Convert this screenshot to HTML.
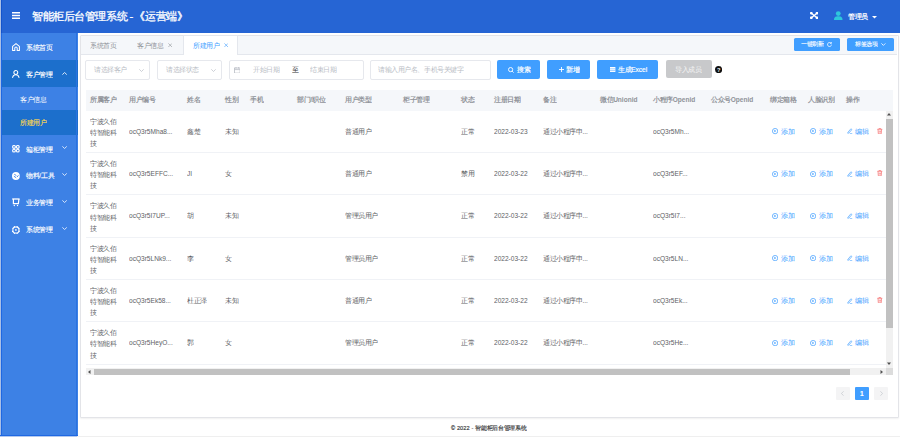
<!DOCTYPE html>
<html><head><meta charset="utf-8">
<style>
*{margin:0;padding:0;box-sizing:border-box;}
html,body{width:900px;height:437px;overflow:hidden;background:#fff;font-family:"Liberation Sans",sans-serif;}
.a{position:absolute;}
.t{position:absolute;white-space:nowrap;line-height:1;transform-origin:0 0;transform:scale(0.46875);}
</style></head>
<body>
<div class="a" style="left:0px;top:0px;width:900px;height:32.6px;background:#2665d4"></div>
<svg class="a" style="left:11.7px;top:12px" width="8.5" height="7" viewBox="0 0 8.5 7"><rect x="0" y="0" width="8.5" height="1.5" fill="#fff"/><rect x="0" y="2.75" width="8.5" height="1.5" fill="#fff"/><rect x="0" y="5.5" width="8.5" height="1.5" fill="#fff"/></svg>
<div class="t" style="left:31.5px;top:10.8px;font-size:24px;color:#fff;letter-spacing:-1.45px;-webkit-text-stroke:0.6px #fff;">智能柜后台管理系统 -</div>
<div class="t" style="left:134.4px;top:10.8px;font-size:24px;color:#fff;letter-spacing:-0.9px;-webkit-text-stroke:0.6px #fff;">《运营端》</div>
<svg class="a" style="left:809.8px;top:12px" width="8.3" height="7" viewBox="0 0 8.3 7"><path d="M1.2 1.1 L7.1 5.9 M7.1 1.1 L1.2 5.9" stroke="#fff" stroke-width="1.3"/><rect x="0" y="0" width="2.6" height="2.4" rx="0.8" fill="#fff"/><rect x="5.7" y="0" width="2.6" height="2.4" rx="0.8" fill="#fff"/><rect x="0" y="4.6" width="2.6" height="2.4" rx="0.8" fill="#fff"/><rect x="5.7" y="4.6" width="2.6" height="2.4" rx="0.8" fill="#fff"/></svg>
<svg class="a" style="left:834px;top:11px" width="8.5" height="9" viewBox="0 0 8.5 9"><circle cx="4.25" cy="2.6" r="2.4" fill="#2ec7dc"/><path d="M0 9 C0 5.8 1.8 5.2 4.25 5.2 C6.7 5.2 8.5 5.8 8.5 9Z" fill="#2ec7dc"/></svg>
<div class="t" style="left:847.8px;top:13.3px;font-size:14px;color:#fff;font-weight:bold;">管理员</div>
<svg class="a" style="left:871.7px;top:16px" width="5" height="2.5" viewBox="0 0 5 2.5"><path d="M0 0 H5 L2.5 2.5Z" fill="#fff"/></svg>
<div class="a" style="left:0px;top:32.6px;width:77.5px;height:404.4px;background:#3d81e5"></div>
<div class="a" style="left:0px;top:59.9px;width:77.5px;height:26.7px;background:#1c6fcc"></div>
<div class="a" style="left:0px;top:110.4px;width:77.5px;height:24.6px;background:#1c6fcc"></div>
<svg class="a" style="left:12px;top:42.8px" width="8" height="8" viewBox="0 0 8 8"><path d="M0.6 7.4 V3.3 L4 0.6 L7.4 3.3 V7.4 H5.2 V5.2 A1.2 1.2 0 0 0 2.8 5.2 V7.4Z" fill="none" stroke="#fff" stroke-width="1.05" stroke-linejoin="round"/></svg>
<div class="t" style="left:26px;top:43.9px;font-size:14px;color:#fff;-webkit-text-stroke:0.25px #fff;">系统首页</div>
<svg class="a" style="left:12.3px;top:70.4px" width="7.6" height="7.8" viewBox="0 0 7.6 7.8"><circle cx="3.8" cy="2.5" r="1.95" fill="none" stroke="#fff" stroke-width="1.05"/><path d="M0.6 7.5 C1 5.6 2.2 4.7 3.8 4.7 C5.4 4.7 6.6 5.6 7 7.5" fill="none" stroke="#fff" stroke-width="1.05" stroke-linecap="round"/></svg>
<div class="t" style="left:26px;top:70.7px;font-size:14px;color:#fff;-webkit-text-stroke:0.25px #fff;">客户管理</div>
<svg class="a" style="left:62.4px;top:72.2px" width="5.2" height="3" viewBox="0 0 5.2 3"><path d="M0.4 2.6 L2.6 0.5 L4.8 2.6" fill="none" stroke="#fff" stroke-width="0.85"/></svg>
<div class="t" style="left:19.9px;top:96.1px;font-size:14px;color:#fff;">客户信息</div>
<div class="t" style="left:19.9px;top:119.1px;font-size:14px;color:#ffd84b;-webkit-text-stroke:0.25px #ffd84b;">所建用户</div>
<svg class="a" style="left:12px;top:145.2px" width="7.8" height="7.6" viewBox="0 0 7.8 7.6"><circle cx="2" cy="1.95" r="1.4" fill="none" stroke="#fff" stroke-width="1.15"/><circle cx="5.8" cy="1.95" r="1.4" fill="none" stroke="#fff" stroke-width="1.15"/><circle cx="2" cy="5.65" r="1.4" fill="none" stroke="#fff" stroke-width="1.15"/><circle cx="5.8" cy="5.65" r="1.4" fill="none" stroke="#fff" stroke-width="1.15"/></svg>
<div class="t" style="left:26px;top:145.5px;font-size:14px;color:#fff;-webkit-text-stroke:0.25px #fff;">箱柜管理</div>
<svg class="a" style="left:62.4px;top:146.3px" width="5.2" height="3" viewBox="0 0 5.2 3"><path d="M0.4 0.4 L2.6 2.5 L4.8 0.4" fill="none" stroke="#fff" stroke-width="0.8"/></svg>
<svg class="a" style="left:12px;top:171.9px" width="7.8" height="8" viewBox="0 0 7.8 8"><circle cx="3.9" cy="4" r="3.9" fill="#fff"/><path d="M2.6 2.5 L4 3.3 M2.2 4.4 L3.9 5.6 M5.3 4.7 L6.2 3.6" stroke="#3d81e5" stroke-width="0.9" stroke-linecap="round"/></svg>
<div class="t" style="left:26px;top:172.3px;font-size:14px;color:#fff;-webkit-text-stroke:0.25px #fff;">物料/工具</div>
<svg class="a" style="left:62.4px;top:173.1px" width="5.2" height="3" viewBox="0 0 5.2 3"><path d="M0.4 0.4 L2.6 2.5 L4.8 0.4" fill="none" stroke="#fff" stroke-width="0.8"/></svg>
<svg class="a" style="left:12px;top:198px" width="7.8" height="8.6" viewBox="0 0 7.8 8.6"><path d="M0.2 1 H7.6" stroke="#fff" stroke-width="1.3"/><path d="M1.4 1 V5.6 H6.4 L6.9 1" fill="none" stroke="#fff" stroke-width="1.2"/><circle cx="2.3" cy="7.5" r="0.7" fill="#fff"/><circle cx="5.5" cy="7.5" r="0.7" fill="#fff"/></svg>
<div class="t" style="left:26px;top:199.3px;font-size:14px;color:#fff;-webkit-text-stroke:0.25px #fff;">业务管理</div>
<svg class="a" style="left:62.4px;top:200.1px" width="5.2" height="3" viewBox="0 0 5.2 3"><path d="M0.4 0.4 L2.6 2.5 L4.8 0.4" fill="none" stroke="#fff" stroke-width="0.8"/></svg>
<svg class="a" style="left:12px;top:226px" width="7.8" height="7.9" viewBox="0 0 7.8 7.9"><path d="M2.4 0 H5.4 L7.8 2.4 V5.5 L5.4 7.9 H2.4 L0 5.5 V2.4Z" fill="#fff"/><circle cx="3.9" cy="3.95" r="2.55" fill="#3d81e5"/><path d="M3.9 0 V0.9 M3.9 7.9 V7 M0 3.95 H0.9 M7.8 3.95 H6.9" stroke="#3d81e5" stroke-width="0.8"/><rect x="3.15" y="3.2" width="1.5" height="1.5" fill="#fff"/></svg>
<div class="t" style="left:26px;top:226.3px;font-size:14px;color:#fff;-webkit-text-stroke:0.25px #fff;">系统管理</div>
<svg class="a" style="left:62.4px;top:227.1px" width="5.2" height="3" viewBox="0 0 5.2 3"><path d="M0.4 0.4 L2.6 2.5 L4.8 0.4" fill="none" stroke="#fff" stroke-width="0.8"/></svg>
<div class="a" style="left:80px;top:35px;width:818.5px;height:382.5px;border:1px solid #e3e4e8;border-radius:1px;background:#fff;box-shadow:0 1px 2px rgba(0,0,0,.06)"></div>
<div class="a" style="left:81px;top:36px;width:816px;height:19px;background:#f5f7fa;border-bottom:1px solid #e4e7ed"></div>
<div class="t" style="left:90px;top:42.1px;font-size:14px;color:#909399;">系统首页</div>
<div class="t" style="left:137.2px;top:42.1px;font-size:14px;color:#909399;">客户信息</div>
<svg class="a" style="left:168px;top:43.2px" width="4.4" height="4.4" viewBox="0 0 4.4 4.4"><path d="M0.4 0.4 L4 4 M4 0.4 L0.4 4" stroke="#909399" stroke-width="0.6"/></svg>
<div class="a" style="left:182.8px;top:35px;width:55.5px;height:20px;background:#fff;border:1px solid #e4e7ed;border-bottom:none"></div>
<div class="t" style="left:192.8px;top:42.1px;font-size:14px;color:#409eff;">所建用户</div>
<svg class="a" style="left:224px;top:43.2px" width="4.4" height="4.4" viewBox="0 0 4.4 4.4"><path d="M0.4 0.4 L4 4 M4 0.4 L0.4 4" stroke="#409eff" stroke-width="0.6"/></svg>
<div class="a" style="left:793.7px;top:38px;width:46.5px;height:13.2px;background:#409eff;border-radius:1.5px"></div>
<div class="t" style="left:801px;top:41.2px;font-size:12px;color:#fff;-webkit-text-stroke:0.2px #fff;">一键刷新</div>
<svg class="a" style="left:827.3px;top:42px" width="5" height="5" viewBox="0 0 5 5"><path d="M4.1 1.3 A2 2 0 1 0 4.5 2.7" fill="none" stroke="#fff" stroke-width="0.8"/><path d="M2.9 1.4 H4.4 V0" fill="none" stroke="#fff" stroke-width="0.7"/></svg>
<div class="a" style="left:846.8px;top:38px;width:46.9px;height:13.2px;background:#409eff;border-radius:1.5px"></div>
<div class="t" style="left:854.8px;top:41.2px;font-size:12px;color:#fff;-webkit-text-stroke:0.2px #fff;">标签选项</div>
<svg class="a" style="left:881.2px;top:43.2px" width="4.8" height="3" viewBox="0 0 4.8 3"><path d="M0.4 0.4 L2.4 2.4 L4.4 0.4" fill="none" stroke="#fff" stroke-width="0.8"/></svg>
<div class="a" style="left:85.3px;top:60px;width:64.6px;height:19.6px;border:1px solid #e6e8ed;border-radius:2px;background:#fff"></div>
<div class="t" style="left:93.9px;top:66.4px;font-size:14px;color:#b9bdc5;">请选择客户</div>
<svg class="a" style="left:139.2px;top:68.5px" width="5" height="3" viewBox="0 0 5 3"><path d="M0.3 0.3 L2.5 2.5 L4.7 0.3" fill="none" stroke="#b9bdc5" stroke-width="0.7"/></svg>
<div class="a" style="left:157px;top:60px;width:64.7px;height:19.6px;border:1px solid #e6e8ed;border-radius:2px;background:#fff"></div>
<div class="t" style="left:165.6px;top:66.4px;font-size:14px;color:#b9bdc5;">请选择状态</div>
<svg class="a" style="left:210.9px;top:68.5px" width="5" height="3" viewBox="0 0 5 3"><path d="M0.3 0.3 L2.5 2.5 L4.7 0.3" fill="none" stroke="#b9bdc5" stroke-width="0.7"/></svg>
<div class="a" style="left:228.9px;top:60px;width:134.8px;height:19.6px;border:1px solid #e6e8ed;border-radius:2px;background:#fff"></div>
<svg class="a" style="left:233.9px;top:66.5px" width="6.6" height="6.6" viewBox="0 0 6.6 6.6"><rect x="0.5" y="1" width="5.6" height="5.1" fill="none" stroke="#b9bdc5" stroke-width="0.8"/><path d="M0.5 2.6 H6.1 M2 0 V1.6 M4.6 0 V1.6" stroke="#b9bdc5" stroke-width="0.8"/></svg>
<div class="t" style="left:252.6px;top:66.4px;font-size:14px;color:#b9bdc5;">开始日期</div>
<div class="t" style="left:291.7px;top:66.4px;font-size:14px;color:#303133;">至</div>
<div class="t" style="left:310px;top:66.4px;font-size:14px;color:#b9bdc5;">结束日期</div>
<div class="a" style="left:370.4px;top:60px;width:120.2px;height:19.6px;border:1px solid #e6e8ed;border-radius:2px;background:#fff"></div>
<div class="t" style="left:378px;top:66.4px;font-size:14px;color:#b9bdc5;">请输入用户名、手机号关键字</div>
<div class="a" style="left:497.4px;top:60.2px;width:42.8px;height:19px;background:#409eff;border-radius:2px"></div>
<svg class="a" style="left:508px;top:66.8px" width="6" height="6" viewBox="0 0 6 6"><circle cx="2.6" cy="2.6" r="2.1" fill="none" stroke="#fff" stroke-width="0.9"/><path d="M4.1 4.1 L5.6 5.6" stroke="#fff" stroke-width="0.9"/></svg>
<div class="t" style="left:516.6px;top:66.4px;font-size:14px;color:#fff;-webkit-text-stroke:0.35px #fff;">搜索</div>
<div class="a" style="left:547.4px;top:60.2px;width:42.6px;height:19px;background:#409eff;border-radius:2px"></div>
<svg class="a" style="left:558.6px;top:67.2px" width="5" height="5" viewBox="0 0 5 5"><path d="M2.5 0 V5 M0 2.5 H5" stroke="#fff" stroke-width="0.9"/></svg>
<div class="t" style="left:566.4px;top:66.4px;font-size:14px;color:#fff;-webkit-text-stroke:0.35px #fff;">新增</div>
<div class="a" style="left:597px;top:60.2px;width:60.8px;height:19px;background:#409eff;border-radius:2px"></div>
<svg class="a" style="left:610.3px;top:67px" width="5.4" height="5.4" viewBox="0 0 5.4 5.4"><rect x="0" y="0" width="5.4" height="5.4" fill="#fff"/><path d="M0 1.8 H5.4 M0 3.6 H5.4" stroke="#409eff" stroke-width="0.5"/></svg>
<div class="t" style="left:618px;top:66.4px;font-size:14px;color:#fff;-webkit-text-stroke:0.35px #fff;">生成Excel</div>
<div class="a" style="left:665.6px;top:59.5px;width:46.4px;height:18.8px;background:#c8c9cb;border-radius:2px"></div>
<div class="t" style="left:675px;top:65.7px;font-size:14px;color:#f7f7f7;">导入成员</div>
<svg class="a" style="left:714.8px;top:65.6px" width="7.2" height="7.2" viewBox="0 0 7.2 7.2"><circle cx="3.6" cy="3.6" r="3.6" fill="#111"/><text x="3.6" y="5.7" font-size="5.6" font-weight="bold" text-anchor="middle" fill="#fff" font-family="Liberation Sans">?</text></svg>
<div class="a" style="left:85.6px;top:90px;width:807.4px;height:20.5px;background:#f5f7fa"></div>
<div class="t" style="left:90.4px;top:96.4px;font-size:14px;color:#909399;font-weight:bold;">所属客户</div>
<div class="t" style="left:129px;top:96.4px;font-size:14px;color:#909399;font-weight:bold;">用户编号</div>
<div class="t" style="left:186.6px;top:96.4px;font-size:14px;color:#909399;font-weight:bold;">姓名</div>
<div class="t" style="left:225px;top:96.4px;font-size:14px;color:#909399;font-weight:bold;">性别</div>
<div class="t" style="left:249.6px;top:96.4px;font-size:14px;color:#909399;font-weight:bold;">手机</div>
<div class="t" style="left:297px;top:96.4px;font-size:14px;color:#909399;font-weight:bold;">部门/职位</div>
<div class="t" style="left:345.4px;top:96.4px;font-size:14px;color:#909399;font-weight:bold;">用户类型</div>
<div class="t" style="left:403px;top:96.4px;font-size:14px;color:#909399;font-weight:bold;">柜子管理</div>
<div class="t" style="left:460.6px;top:96.4px;font-size:14px;color:#909399;font-weight:bold;">状态</div>
<div class="t" style="left:494.4px;top:96.4px;font-size:14px;color:#909399;font-weight:bold;">注册日期</div>
<div class="t" style="left:542.6px;top:96.4px;font-size:14px;color:#909399;font-weight:bold;">备注</div>
<div class="t" style="left:600px;top:96.4px;font-size:14px;color:#909399;font-weight:bold;">微信Unionid</div>
<div class="t" style="left:653px;top:96.4px;font-size:14px;color:#909399;font-weight:bold;">小程序Openid</div>
<div class="t" style="left:711px;top:96.4px;font-size:14px;color:#909399;font-weight:bold;">公众号Openid</div>
<div class="t" style="left:769.6px;top:96.4px;font-size:14px;color:#909399;font-weight:bold;">绑定箱格</div>
<div class="t" style="left:808.2px;top:96.4px;font-size:14px;color:#909399;font-weight:bold;">人脸识别</div>
<div class="t" style="left:845.6px;top:96.4px;font-size:14px;color:#909399;font-weight:bold;">操作</div>
<div class="a" style="left:85.6px;top:152.1px;width:800px;height:1px;background:#f0f2f6"></div>
<div class="t" style="left:90.4px;top:117.8px;font-size:14px;color:#606266;">宁波久佰</div>
<div class="t" style="left:90.4px;top:128.9px;font-size:14px;color:#606266;">特智能科</div>
<div class="t" style="left:90.4px;top:140.0px;font-size:14px;color:#606266;">技</div>
<div class="t" style="left:129px;top:127.8px;font-size:14px;color:#606266;">ocQ3r5Mha8...</div>
<div class="t" style="left:186.6px;top:127.8px;font-size:14px;color:#606266;">鑫楚</div>
<div class="t" style="left:225px;top:127.8px;font-size:14px;color:#606266;">未知</div>
<div class="t" style="left:345.4px;top:127.8px;font-size:14px;color:#606266;">普通用户</div>
<div class="t" style="left:460.6px;top:127.8px;font-size:14px;color:#606266;">正常</div>
<div class="t" style="left:494.4px;top:127.8px;font-size:14px;color:#606266;">2022-03-23</div>
<div class="t" style="left:542.6px;top:127.8px;font-size:14px;color:#606266;">通过小程序申...</div>
<div class="t" style="left:653px;top:127.8px;font-size:14px;color:#606266;">ocQ3r5Mh...</div>
<svg class="a" style="left:772px;top:128.4px" width="6.2" height="6.2" viewBox="0 0 6 6"><circle cx="3" cy="3" r="2.6" fill="none" stroke="#409eff" stroke-width="0.7"/><path d="M2.3 1.8 L4.1 3 L2.3 4.2Z" fill="#409eff"/></svg>
<div class="t" style="left:781px;top:127.8px;font-size:14px;color:#409eff;">添加</div>
<svg class="a" style="left:810.3px;top:128.4px" width="6.2" height="6.2" viewBox="0 0 6 6"><circle cx="3" cy="3" r="2.6" fill="none" stroke="#409eff" stroke-width="0.7"/><path d="M2.3 1.8 L4.1 3 L2.3 4.2Z" fill="#409eff"/></svg>
<div class="t" style="left:819.3px;top:127.8px;font-size:14px;color:#409eff;">添加</div>
<svg class="a" style="left:847px;top:128.3px" width="5.6" height="6" viewBox="0 0 6 6.4"><path d="M1 4.6 L4.2 0.8 L5.2 1.7 L2 5.4 L0.8 5.6Z M3 6.1 H5.6" fill="none" stroke="#409eff" stroke-width="0.7"/></svg>
<div class="t" style="left:855.3px;top:127.8px;font-size:14px;color:#409eff;">编辑</div>
<svg class="a" style="left:877.1px;top:127.89999999999999px" width="5.6" height="6.2" viewBox="0 0 5.6 6.2"><path d="M0.3 1.3 H5.3 M2 1.3 V0.4 H3.6 V1.3 M1 1.3 L1.3 5.8 H4.3 L4.6 1.3 M2.2 2.6 V4.6 M3.4 2.6 V4.6" fill="none" stroke="#f56c6c" stroke-width="0.7"/></svg>
<div class="a" style="left:85.6px;top:194.39999999999998px;width:800px;height:1px;background:#f0f2f6"></div>
<div class="t" style="left:90.4px;top:160.1px;font-size:14px;color:#606266;">宁波久佰</div>
<div class="t" style="left:90.4px;top:171.2px;font-size:14px;color:#606266;">特智能科</div>
<div class="t" style="left:90.4px;top:182.29999999999998px;font-size:14px;color:#606266;">技</div>
<div class="t" style="left:129px;top:170.1px;font-size:14px;color:#606266;">ocQ3r5EFFC...</div>
<div class="t" style="left:186.6px;top:170.1px;font-size:14px;color:#606266;">JI</div>
<div class="t" style="left:225px;top:170.1px;font-size:14px;color:#606266;">女</div>
<div class="t" style="left:345.4px;top:170.1px;font-size:14px;color:#606266;">普通用户</div>
<div class="t" style="left:460.6px;top:170.1px;font-size:14px;color:#606266;">禁用</div>
<div class="t" style="left:494.4px;top:170.1px;font-size:14px;color:#606266;">2022-03-22</div>
<div class="t" style="left:542.6px;top:170.1px;font-size:14px;color:#606266;">通过小程序申...</div>
<div class="t" style="left:653px;top:170.1px;font-size:14px;color:#606266;">ocQ3r5EF...</div>
<svg class="a" style="left:772px;top:170.7px" width="6.2" height="6.2" viewBox="0 0 6 6"><circle cx="3" cy="3" r="2.6" fill="none" stroke="#409eff" stroke-width="0.7"/><path d="M2.3 1.8 L4.1 3 L2.3 4.2Z" fill="#409eff"/></svg>
<div class="t" style="left:781px;top:170.1px;font-size:14px;color:#409eff;">添加</div>
<svg class="a" style="left:810.3px;top:170.7px" width="6.2" height="6.2" viewBox="0 0 6 6"><circle cx="3" cy="3" r="2.6" fill="none" stroke="#409eff" stroke-width="0.7"/><path d="M2.3 1.8 L4.1 3 L2.3 4.2Z" fill="#409eff"/></svg>
<div class="t" style="left:819.3px;top:170.1px;font-size:14px;color:#409eff;">添加</div>
<svg class="a" style="left:847px;top:170.6px" width="5.6" height="6" viewBox="0 0 6 6.4"><path d="M1 4.6 L4.2 0.8 L5.2 1.7 L2 5.4 L0.8 5.6Z M3 6.1 H5.6" fill="none" stroke="#409eff" stroke-width="0.7"/></svg>
<div class="t" style="left:855.3px;top:170.1px;font-size:14px;color:#409eff;">编辑</div>
<svg class="a" style="left:877.1px;top:170.2px" width="5.6" height="6.2" viewBox="0 0 5.6 6.2"><path d="M0.3 1.3 H5.3 M2 1.3 V0.4 H3.6 V1.3 M1 1.3 L1.3 5.8 H4.3 L4.6 1.3 M2.2 2.6 V4.6 M3.4 2.6 V4.6" fill="none" stroke="#f56c6c" stroke-width="0.7"/></svg>
<div class="a" style="left:85.6px;top:236.7px;width:800px;height:1px;background:#f0f2f6"></div>
<div class="t" style="left:90.4px;top:202.39999999999998px;font-size:14px;color:#606266;">宁波久佰</div>
<div class="t" style="left:90.4px;top:213.49999999999997px;font-size:14px;color:#606266;">特智能科</div>
<div class="t" style="left:90.4px;top:224.59999999999997px;font-size:14px;color:#606266;">技</div>
<div class="t" style="left:129px;top:212.39999999999998px;font-size:14px;color:#606266;">ocQ3r5I7UP...</div>
<div class="t" style="left:186.6px;top:212.39999999999998px;font-size:14px;color:#606266;">胡</div>
<div class="t" style="left:225px;top:212.39999999999998px;font-size:14px;color:#606266;">未知</div>
<div class="t" style="left:345.4px;top:212.39999999999998px;font-size:14px;color:#606266;">管理员用户</div>
<div class="t" style="left:460.6px;top:212.39999999999998px;font-size:14px;color:#606266;">正常</div>
<div class="t" style="left:494.4px;top:212.39999999999998px;font-size:14px;color:#606266;">2022-03-22</div>
<div class="t" style="left:542.6px;top:212.39999999999998px;font-size:14px;color:#606266;">通过小程序申...</div>
<div class="t" style="left:653px;top:212.39999999999998px;font-size:14px;color:#606266;">ocQ3r5I7...</div>
<svg class="a" style="left:772px;top:212.99999999999997px" width="6.2" height="6.2" viewBox="0 0 6 6"><circle cx="3" cy="3" r="2.6" fill="none" stroke="#409eff" stroke-width="0.7"/><path d="M2.3 1.8 L4.1 3 L2.3 4.2Z" fill="#409eff"/></svg>
<div class="t" style="left:781px;top:212.39999999999998px;font-size:14px;color:#409eff;">添加</div>
<svg class="a" style="left:810.3px;top:212.99999999999997px" width="6.2" height="6.2" viewBox="0 0 6 6"><circle cx="3" cy="3" r="2.6" fill="none" stroke="#409eff" stroke-width="0.7"/><path d="M2.3 1.8 L4.1 3 L2.3 4.2Z" fill="#409eff"/></svg>
<div class="t" style="left:819.3px;top:212.39999999999998px;font-size:14px;color:#409eff;">添加</div>
<svg class="a" style="left:847px;top:212.89999999999998px" width="5.6" height="6" viewBox="0 0 6 6.4"><path d="M1 4.6 L4.2 0.8 L5.2 1.7 L2 5.4 L0.8 5.6Z M3 6.1 H5.6" fill="none" stroke="#409eff" stroke-width="0.7"/></svg>
<div class="t" style="left:855.3px;top:212.39999999999998px;font-size:14px;color:#409eff;">编辑</div>
<div class="a" style="left:85.6px;top:279.0px;width:800px;height:1px;background:#f0f2f6"></div>
<div class="t" style="left:90.4px;top:244.7px;font-size:14px;color:#606266;">宁波久佰</div>
<div class="t" style="left:90.4px;top:255.79999999999998px;font-size:14px;color:#606266;">特智能科</div>
<div class="t" style="left:90.4px;top:266.9px;font-size:14px;color:#606266;">技</div>
<div class="t" style="left:129px;top:254.7px;font-size:14px;color:#606266;">ocQ3r5LNk9...</div>
<div class="t" style="left:186.6px;top:254.7px;font-size:14px;color:#606266;">李</div>
<div class="t" style="left:225px;top:254.7px;font-size:14px;color:#606266;">女</div>
<div class="t" style="left:345.4px;top:254.7px;font-size:14px;color:#606266;">管理员用户</div>
<div class="t" style="left:460.6px;top:254.7px;font-size:14px;color:#606266;">正常</div>
<div class="t" style="left:494.4px;top:254.7px;font-size:14px;color:#606266;">2022-03-22</div>
<div class="t" style="left:542.6px;top:254.7px;font-size:14px;color:#606266;">通过小程序申...</div>
<div class="t" style="left:653px;top:254.7px;font-size:14px;color:#606266;">ocQ3r5LN...</div>
<svg class="a" style="left:772px;top:255.29999999999998px" width="6.2" height="6.2" viewBox="0 0 6 6"><circle cx="3" cy="3" r="2.6" fill="none" stroke="#409eff" stroke-width="0.7"/><path d="M2.3 1.8 L4.1 3 L2.3 4.2Z" fill="#409eff"/></svg>
<div class="t" style="left:781px;top:254.7px;font-size:14px;color:#409eff;">添加</div>
<svg class="a" style="left:810.3px;top:255.29999999999998px" width="6.2" height="6.2" viewBox="0 0 6 6"><circle cx="3" cy="3" r="2.6" fill="none" stroke="#409eff" stroke-width="0.7"/><path d="M2.3 1.8 L4.1 3 L2.3 4.2Z" fill="#409eff"/></svg>
<div class="t" style="left:819.3px;top:254.7px;font-size:14px;color:#409eff;">添加</div>
<svg class="a" style="left:847px;top:255.2px" width="5.6" height="6" viewBox="0 0 6 6.4"><path d="M1 4.6 L4.2 0.8 L5.2 1.7 L2 5.4 L0.8 5.6Z M3 6.1 H5.6" fill="none" stroke="#409eff" stroke-width="0.7"/></svg>
<div class="t" style="left:855.3px;top:254.7px;font-size:14px;color:#409eff;">编辑</div>
<div class="a" style="left:85.6px;top:321.3px;width:800px;height:1px;background:#f0f2f6"></div>
<div class="t" style="left:90.4px;top:287.0px;font-size:14px;color:#606266;">宁波久佰</div>
<div class="t" style="left:90.4px;top:298.1px;font-size:14px;color:#606266;">特智能科</div>
<div class="t" style="left:90.4px;top:309.2px;font-size:14px;color:#606266;">技</div>
<div class="t" style="left:129px;top:297.0px;font-size:14px;color:#606266;">ocQ3r5Ek58...</div>
<div class="t" style="left:186.6px;top:297.0px;font-size:14px;color:#606266;">杜正泽</div>
<div class="t" style="left:225px;top:297.0px;font-size:14px;color:#606266;">未知</div>
<div class="t" style="left:345.4px;top:297.0px;font-size:14px;color:#606266;">普通用户</div>
<div class="t" style="left:460.6px;top:297.0px;font-size:14px;color:#606266;">正常</div>
<div class="t" style="left:494.4px;top:297.0px;font-size:14px;color:#606266;">2022-03-22</div>
<div class="t" style="left:542.6px;top:297.0px;font-size:14px;color:#606266;">通过小程序申...</div>
<div class="t" style="left:653px;top:297.0px;font-size:14px;color:#606266;">ocQ3r5Ek...</div>
<svg class="a" style="left:772px;top:297.6px" width="6.2" height="6.2" viewBox="0 0 6 6"><circle cx="3" cy="3" r="2.6" fill="none" stroke="#409eff" stroke-width="0.7"/><path d="M2.3 1.8 L4.1 3 L2.3 4.2Z" fill="#409eff"/></svg>
<div class="t" style="left:781px;top:297.0px;font-size:14px;color:#409eff;">添加</div>
<svg class="a" style="left:810.3px;top:297.6px" width="6.2" height="6.2" viewBox="0 0 6 6"><circle cx="3" cy="3" r="2.6" fill="none" stroke="#409eff" stroke-width="0.7"/><path d="M2.3 1.8 L4.1 3 L2.3 4.2Z" fill="#409eff"/></svg>
<div class="t" style="left:819.3px;top:297.0px;font-size:14px;color:#409eff;">添加</div>
<svg class="a" style="left:847px;top:297.5px" width="5.6" height="6" viewBox="0 0 6 6.4"><path d="M1 4.6 L4.2 0.8 L5.2 1.7 L2 5.4 L0.8 5.6Z M3 6.1 H5.6" fill="none" stroke="#409eff" stroke-width="0.7"/></svg>
<div class="t" style="left:855.3px;top:297.0px;font-size:14px;color:#409eff;">编辑</div>
<svg class="a" style="left:877.1px;top:297.1px" width="5.6" height="6.2" viewBox="0 0 5.6 6.2"><path d="M0.3 1.3 H5.3 M2 1.3 V0.4 H3.6 V1.3 M1 1.3 L1.3 5.8 H4.3 L4.6 1.3 M2.2 2.6 V4.6 M3.4 2.6 V4.6" fill="none" stroke="#f56c6c" stroke-width="0.7"/></svg>
<div class="a" style="left:85.6px;top:363.6px;width:800px;height:1px;background:#f0f2f6"></div>
<div class="t" style="left:90.4px;top:329.3px;font-size:14px;color:#606266;">宁波久佰</div>
<div class="t" style="left:90.4px;top:340.40000000000003px;font-size:14px;color:#606266;">特智能科</div>
<div class="t" style="left:90.4px;top:351.5px;font-size:14px;color:#606266;">技</div>
<div class="t" style="left:129px;top:339.3px;font-size:14px;color:#606266;">ocQ3r5HeyO...</div>
<div class="t" style="left:186.6px;top:339.3px;font-size:14px;color:#606266;">郭</div>
<div class="t" style="left:225px;top:339.3px;font-size:14px;color:#606266;">女</div>
<div class="t" style="left:345.4px;top:339.3px;font-size:14px;color:#606266;">管理员用户</div>
<div class="t" style="left:460.6px;top:339.3px;font-size:14px;color:#606266;">正常</div>
<div class="t" style="left:494.4px;top:339.3px;font-size:14px;color:#606266;">2022-03-22</div>
<div class="t" style="left:542.6px;top:339.3px;font-size:14px;color:#606266;">通过小程序申...</div>
<div class="t" style="left:653px;top:339.3px;font-size:14px;color:#606266;">ocQ3r5He...</div>
<svg class="a" style="left:772px;top:339.90000000000003px" width="6.2" height="6.2" viewBox="0 0 6 6"><circle cx="3" cy="3" r="2.6" fill="none" stroke="#409eff" stroke-width="0.7"/><path d="M2.3 1.8 L4.1 3 L2.3 4.2Z" fill="#409eff"/></svg>
<div class="t" style="left:781px;top:339.3px;font-size:14px;color:#409eff;">添加</div>
<svg class="a" style="left:810.3px;top:339.90000000000003px" width="6.2" height="6.2" viewBox="0 0 6 6"><circle cx="3" cy="3" r="2.6" fill="none" stroke="#409eff" stroke-width="0.7"/><path d="M2.3 1.8 L4.1 3 L2.3 4.2Z" fill="#409eff"/></svg>
<div class="t" style="left:819.3px;top:339.3px;font-size:14px;color:#409eff;">添加</div>
<svg class="a" style="left:847px;top:339.8px" width="5.6" height="6" viewBox="0 0 6 6.4"><path d="M1 4.6 L4.2 0.8 L5.2 1.7 L2 5.4 L0.8 5.6Z M3 6.1 H5.6" fill="none" stroke="#409eff" stroke-width="0.7"/></svg>
<div class="t" style="left:855.3px;top:339.3px;font-size:14px;color:#409eff;">编辑</div>
<div class="a" style="left:85.6px;top:368px;width:800px;height:7px;background:#f1f1f1"></div>
<div class="a" style="left:93.8px;top:368.5px;width:756.5px;height:6px;background:#c1c1c1"></div>
<svg class="a" style="left:88px;top:369.5px" width="3" height="4" viewBox="0 0 3 4"><path d="M2.5 0 L0 2 L2.5 4Z" fill="#505050"/></svg>
<svg class="a" style="left:879.7px;top:369.5px" width="3" height="4" viewBox="0 0 3 4"><path d="M0.5 0 L3 2 L0.5 4Z" fill="#505050"/></svg>
<div class="a" style="left:885.6px;top:110.5px;width:7.4px;height:257.5px;background:#f1f1f1"></div>
<div class="a" style="left:886px;top:119px;width:6.6px;height:208.5px;background:#c1c1c1"></div>
<svg class="a" style="left:887.3px;top:113px" width="4" height="3" viewBox="0 0 4 3"><path d="M0 2.5 L2 0 L4 2.5Z" fill="#505050"/></svg>
<svg class="a" style="left:887.3px;top:362.3px" width="4" height="3" viewBox="0 0 4 3"><path d="M0 0.5 L2 3 L4 0.5Z" fill="#505050"/></svg>
<div class="a" style="left:885.6px;top:368px;width:7.4px;height:7px;background:#dcdcdc"></div>
<div class="a" style="left:835.6px;top:387px;width:14px;height:12.8px;background:#f4f4f5;border-radius:1px"></div>
<svg class="a" style="left:841.1px;top:391px" width="3" height="5" viewBox="0 0 3 5"><path d="M2.6 0.3 L0.4 2.5 L2.6 4.7" fill="none" stroke="#b9bdc5" stroke-width="0.6"/></svg>
<div class="a" style="left:854.8px;top:387px;width:14.2px;height:12.8px;background:#409eff;border-radius:1px"></div>
<div class="t" style="left:859.6px;top:389.9px;font-size:14px;color:#fff;font-weight:bold;-webkit-text-stroke:0.3px #fff;">1</div>
<div class="a" style="left:874px;top:387px;width:14.2px;height:12.8px;background:#f4f4f5;border-radius:1px"></div>
<svg class="a" style="left:879.7px;top:391px" width="3" height="5" viewBox="0 0 3 5"><path d="M0.4 0.3 L2.6 2.5 L0.4 4.7" fill="none" stroke="#b9bdc5" stroke-width="0.6"/></svg>
<div class="a" style="left:0px;top:0px;width:1px;height:437px;background:#a9bfe6"></div>
<div class="a" style="left:1px;top:0px;width:1px;height:32.6px;background:#1454cc"></div>
<div class="a" style="left:1px;top:32.6px;width:1px;height:403px;background:#1f68e2"></div>
<div class="a" style="left:76.4px;top:32.6px;width:1.1px;height:403px;background:#2a72e0"></div>
<div class="a" style="left:0px;top:435px;width:77.5px;height:1px;background:#1f68e2"></div>
<div class="a" style="left:0px;top:436px;width:77.5px;height:1px;background:#b3c9ee"></div>
<div class="t" style="left:451.3px;top:424.6px;font-size:12px;color:#303133;letter-spacing:0.2px;-webkit-text-stroke:0.3px #303133;">© 2022 - 智能柜后台管理系统</div>
<div class="a" style="left:77.2px;top:436px;width:822.8px;height:1px;background:#efefef"></div>
</body></html>
